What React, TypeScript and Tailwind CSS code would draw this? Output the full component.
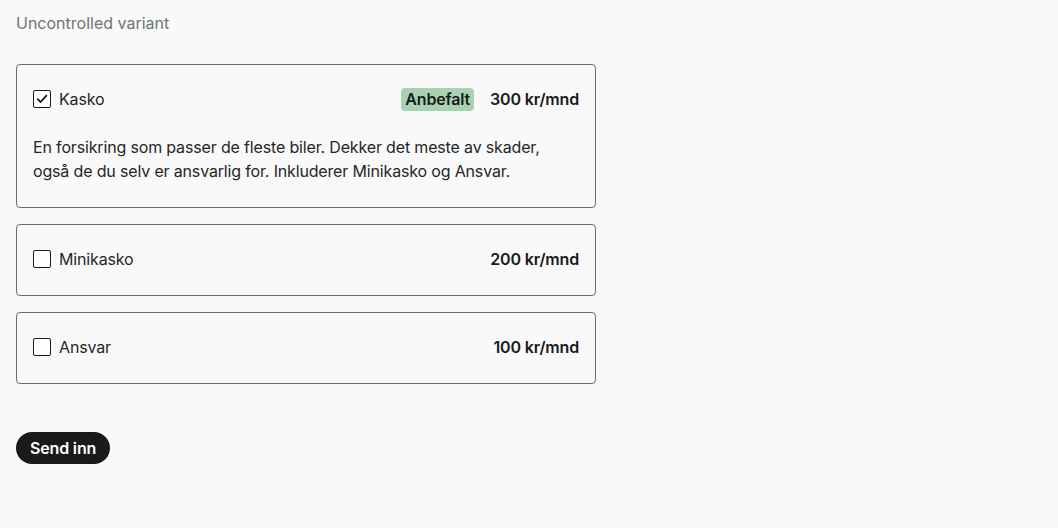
import { useState } from "react"

type Option = {
  id: string
  label: string
  price: string
  badge?: string
  description?: React.ReactNode
}

const options: Option[] = [
  {
    id: "kasko",
    label: "Kasko",
    price: "300 kr/mnd",
    badge: "Anbefalt",
    description: (
      <>
        En forsikring som passer de fleste biler. Dekker det meste av skader,
        <br />
        også de du selv er ansvarlig for. Inkluderer Minikasko og Ansvar.
      </>
    ),
  },
  { id: "minikasko", label: "Minikasko", price: "200 kr/mnd" },
  { id: "ansvar", label: "Ansvar", price: "100 kr/mnd" },
]

function Checkbox({ checked }: { checked: boolean }) {
  return (
    <span className="flex h-[18px] w-[18px] shrink-0 items-center justify-center rounded-[2px] border border-[#1a1a1a] bg-white">
      {checked && (
        <svg width="12" height="12" viewBox="0 0 12 12" fill="none">
          <path d="M1.8 6.2 4.6 9 10.4 2.6" stroke="#1a1a1a" strokeWidth="1.8" strokeLinecap="round" strokeLinejoin="round" />
        </svg>
      )}
    </span>
  )
}

export default function App() {
  const [selected, setSelected] = useState<Record<string, boolean>>({ kasko: true })

  return (
    <div className="min-h-screen bg-[#f9f9f9] px-4 pt-[12px] font-['Inter',sans-serif] text-[16px] tracking-[-0.01em] text-[#262626]">
      <p className="leading-[22px] tracking-normal text-[#737373]">Uncontrolled variant</p>

      <div className="mt-[30px] flex w-[580px] flex-col gap-4">
        {options.map((o) => {
          const checked = !!selected[o.id]
          return (
            <label
              key={o.id}
              onClick={() => setSelected((s) => ({ ...s, [o.id]: !s[o.id] }))}
              className="block cursor-pointer rounded-[4px] border border-[#6b6b6b] px-4 pt-[22px] pb-6"
            >
              <div className="flex h-6 items-center">
                <Checkbox checked={checked} />
                <span className="ml-2">{o.label}</span>
                <div className="ml-auto flex items-center gap-4 text-[#1a1a1a]">
                  {o.badge && (
                    <span className="rounded-[4px] bg-[#a8d3b3] px-1 font-semibold leading-[23px]">
                      {o.badge}
                    </span>
                  )}
                  <span className="font-semibold">{o.price}</span>
                </div>
              </div>
              {o.description && (
                <p className="mt-6 leading-6">{o.description}</p>
              )}
            </label>
          )
        })}
      </div>

      <button className="mt-12 h-8 rounded-full bg-[#1a1a1a] px-[14px] pb-px font-semibold text-white">
        Send inn
      </button>
    </div>
  )
}
